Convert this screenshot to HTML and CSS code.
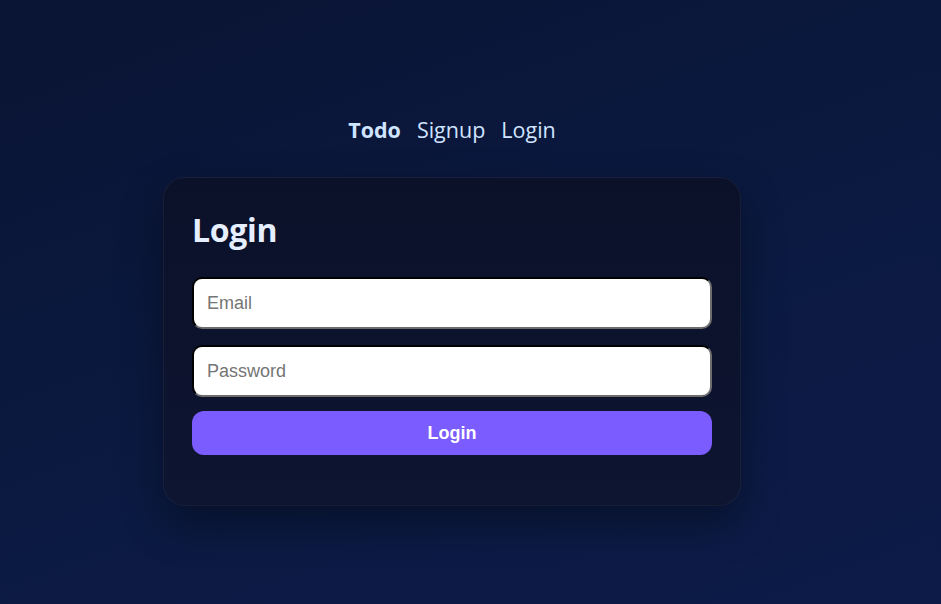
FILE: index.html
```html
<!DOCTYPE html>
<html lang="en">
<head>
<meta charset="utf-8">
<title>Login</title>
<link rel="stylesheet" href="styles.css">
</head>
<body>
<div class="page">
  <nav class="nav">
    <a class="brand" href="#">Todo</a>
    <a href="#">Signup</a>
    <a href="#">Login</a>
  </nav>
  <div class="card">
    <h1 class="title">Login</h1>
    <form class="form">
      <input class="field" type="email" placeholder="Email">
      <input class="field" type="password" placeholder="Password">
      <button class="btn" type="button">Login</button>
    </form>
  </div>
</div>
</body>
</html>
```
FILE: styles.css
```css
html, body {
  margin: 0;
  height: 100%;
}
body {
  background: linear-gradient(160deg, #0a1434 0%, #0b1a42 60%, #0d1b48 100%);
  font-family: "Open Sans", "Noto Sans", sans-serif;
  color: #d6e8ff;
}
.page {
  width: 904px;
  display: flex;
  flex-direction: column;
  align-items: center;
  padding-top: 112px;
}
.nav {
  display: flex;
  gap: 16px;
  font-size: 21.5px;
  line-height: 36px;
}
.nav a {
  color: #cfe4ff;
  text-decoration: none;
}
.nav .brand {
  font-weight: 700;
}
.card {
  margin-top: 29px;
  width: 520px;
  padding: 28px 28px 50px;
  border-radius: 22px;
  border: 1px solid rgba(255,255,255,0.05);
  background: linear-gradient(180deg, #0b1129 0%, #0e1531 100%);
  box-shadow: 0 18px 40px rgba(0,0,0,0.35);
}
.title {
  margin: 0 0 23px;
  font-size: 32px;
  line-height: 48px;
  font-weight: 700;
  color: #e6efff;
  letter-spacing: -0.3px;
}
.form {
  display: flex;
  flex-direction: column;
  gap: 14px;
}
.field {
  box-sizing: border-box;
  height: 52px;
  padding: 0 13px;
  border: 2px inset #767676;
  border-color: #2e2e2e #6d6d6d #6d6d6d #2e2e2e;
  border-radius: 10px;
  background: #fff;
  font-family: "Liberation Sans", Arial, sans-serif;
  font-size: 18px;
  color: #222;
}
.field::placeholder {
  color: #757575;
}
.form .field + .field {
  margin-top: 2px;
}
.btn {
  height: 44px;
  border: 0;
  border-radius: 12px;
  background: #7b5cff;
  color: #fff;
  font-family: "Liberation Sans", Arial, sans-serif;
  font-size: 18px;
  font-weight: 700;
}
```
